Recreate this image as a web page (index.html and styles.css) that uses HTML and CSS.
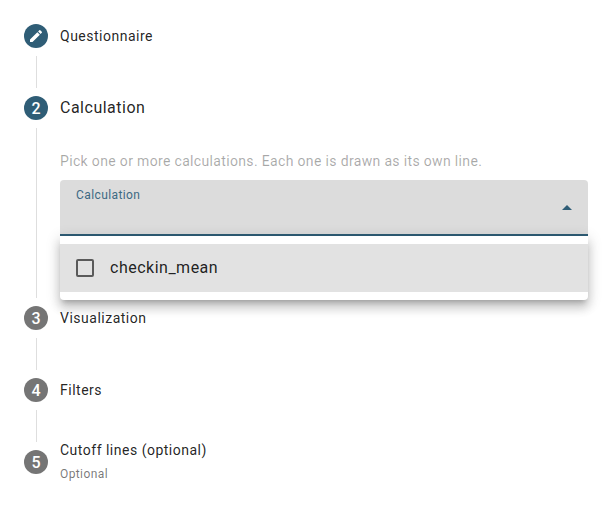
FILE: index.html
```html
<!DOCTYPE html>
<html lang="en">
<head>
<meta charset="UTF-8">
<meta name="viewport" content="width=device-width, initial-scale=1.0">
<title>Chart builder</title>
<link rel="stylesheet" href="styles.css">
</head>
<body>

<div class="stepper">
    <div class="step">
        <div class="step-header">
            <div class="step-icon active">
                <svg viewBox="0 0 24 24" width="16" height="16"><path fill="#fff" d="M3 17.25V21h3.75L17.81 9.94l-3.75-3.75L3 17.25zM20.71 7.04a1 1 0 0 0 0-1.41l-2.34-2.34a1 1 0 0 0-1.41 0l-1.83 1.83 3.75 3.75 1.83-1.83z"/></svg>
            </div>
            <div class="step-label">Questionnaire</div>
        </div>
        <div class="step-line"></div>
    </div>

    <div class="step">
        <div class="step-header">
            <div class="step-icon active">2</div>
            <div class="step-label selected">Calculation</div>
        </div>
        <div class="step-line long"></div>
        <div class="step-body">
            <p class="hint">Pick one or more calculations. Each one is drawn as its own line.</p>
            <div class="select-field">
                <span class="field-label">Calculation</span>
                <span class="arrow"></span>
            </div>
            <div class="panel">
                <div class="option">
                    <span class="checkbox"></span>
                    <span class="option-text">checkin_mean</span>
                </div>
            </div>
        </div>
    </div>

    <div class="step">
        <div class="step-header">
            <div class="step-icon">3</div>
            <div class="step-label">Visualization</div>
        </div>
        <div class="step-line"></div>
    </div>

    <div class="step">
        <div class="step-header">
            <div class="step-icon">4</div>
            <div class="step-label">Filters</div>
        </div>
        <div class="step-line"></div>
    </div>

    <div class="step">
        <div class="step-header">
            <div class="step-icon">5</div>
            <div class="step-label multi">
                Cutoff lines (optional)
                <div class="step-sublabel">Optional</div>
            </div>
        </div>
    </div>
</div>

</body>
</html>
```

FILE: styles.css
```css
body {
    margin: 0;
    padding: 0;
    background: #fff;
    font-family: Roboto, "Liberation Sans", sans-serif;
    color: rgba(0, 0, 0, 0.87);
}
.stepper {
    display: flex;
    flex-direction: column;
}
.step {
    position: relative;
}
.step-header {
    display: flex;
    align-items: center;
    height: 72px;
    padding: 0 24px;
    box-sizing: border-box;
}
.step-icon {
    width: 24px;
    height: 24px;
    flex-shrink: 0;
    margin-right: 12px;
    border-radius: 50%;
    background: #757575;
    color: #fff;
    font-size: 16px;
    font-weight: 500;
    display: flex;
    justify-content: center;
    align-items: center;
}
.step-icon.active {
    background: #2f5d76;
}
.step-label {
    font-size: 14px;
    letter-spacing: 0.5px;
    line-height: 20px;
}
.step-label.selected {
    font-size: 16px;
}
.step-label.multi {
    margin-top: -2px;
}
.step-sublabel {
    margin-top: 6px;
    font-size: 12px;
    letter-spacing: 0.4px;
    line-height: 16px;
    color: rgba(0, 0, 0, 0.54);
}
.step-line {
    position: absolute;
    left: 36px;
    top: 56px;
    width: 1px;
    height: 32px;
    background: #dedede;
}
.step-line.long {
    height: 170px;
}
.step-body {
    position: relative;
    height: 138px;
    padding: 0 24px 0 60px;
}
.hint {
    margin: 0;
    padding-top: 7px;
    height: 29px;
    font-size: 14px;
    line-height: 20px;
    letter-spacing: 0.34px;
    color: rgba(0, 0, 0, 0.34);
}
.select-field {
    position: relative;
    height: 56px;
    box-sizing: border-box;
    padding: 8px 16px;
    background: #dcdcdc;
    border-radius: 4px 4px 0 0;
    border-bottom: 2px solid #2f5d76;
}
.field-label {
    display: block;
    font-size: 12px;
    line-height: 14px;
    letter-spacing: 0.4px;
    color: #3c6a83;
}
.arrow {
    position: absolute;
    right: 16px;
    top: 25px;
    width: 0;
    height: 0;
    border-left: 5px solid transparent;
    border-right: 5px solid transparent;
    border-bottom: 5px solid #2f5d76;
}
.panel {
    position: absolute;
    left: 60px;
    right: 24px;
    top: 92px;
    padding: 8px 0;
    background: #fff;
    border-radius: 0 0 4px 4px;
    box-shadow: 0 5px 5px -3px rgba(0, 0, 0, 0.2), 0 8px 10px 1px rgba(0, 0, 0, 0.14), 0 3px 14px 2px rgba(0, 0, 0, 0.12);
}
.option {
    display: flex;
    align-items: center;
    height: 48px;
    padding: 0 16px;
    background: #e2e2e2;
}
.checkbox {
    width: 18px;
    height: 18px;
    box-sizing: border-box;
    margin-right: 16px;
    border: 2px solid rgba(0, 0, 0, 0.6);
    border-radius: 2px;
}
.option-text {
    font-size: 16px;
    letter-spacing: 0.5px;
    margin-top: -2px;
}
```
